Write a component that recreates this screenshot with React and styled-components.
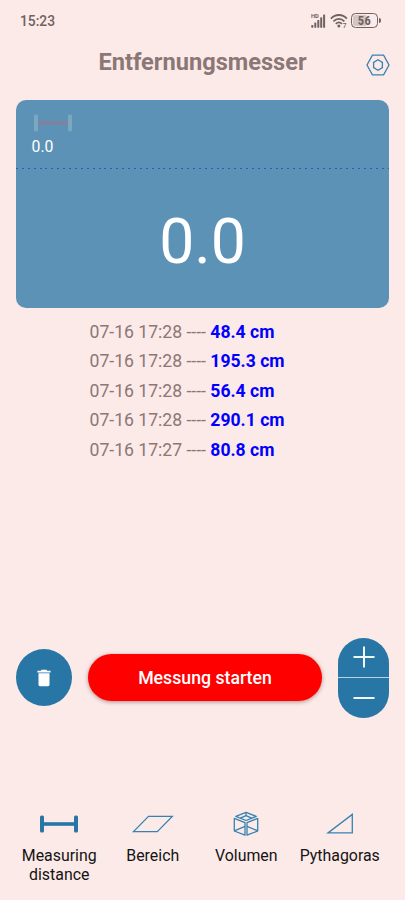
import React from 'react'
import styled, { createGlobalStyle } from 'styled-components'

const blue = '#2876a5'

const history = [
  { date: '07-16 17:28', value: '48.4 cm' },
  { date: '07-16 17:28', value: '195.3 cm' },
  { date: '07-16 17:28', value: '56.4 cm' },
  { date: '07-16 17:28', value: '290.1 cm' },
  { date: '07-16 17:27', value: '80.8 cm' },
]

const SignalIcon = () => (
  <svg width="15" height="16" viewBox="0 0 15 16" fill="#6f6261">
    <text x="0" y="5" fontSize="5.8" fontWeight="700" fontFamily="Roboto, sans-serif">HD</text>
    <rect x="0.3" y="12" width="2" height="2.8" rx="0.6" />
    <rect x="3.3" y="9.4" width="2" height="5.4" rx="0.6" />
    <rect x="6.3" y="7" width="2" height="7.8" rx="0.6" />
    <rect x="9.2" y="4.2" width="2" height="10.6" rx="0.6" />
    <rect x="12.1" y="1.4" width="2" height="13.4" rx="0.6" />
  </svg>
)

const WifiIcon = () => (
  <svg width="18" height="16" viewBox="0 0 18 16" fill="none" stroke="#6f6261" strokeWidth="1.8">
    <path d="M0.9 5.6C5.5 0.8 12.3 0.8 16.9 5.6" />
    <path d="M3.4 8.3C6.7 5 11.1 5 14.4 8.3" />
    <path d="M5.8 10.8C7.7 9 10.1 9 12 10.8" />
    <circle cx="8.9" cy="13" r="1.5" fill="#6f6261" stroke="none" />
    <text x="12.7" y="15.4" fontSize="6.5" fontWeight="500" fontFamily="Roboto, sans-serif" fill="#6f6261" stroke="none">7</text>
  </svg>
)

const SettingsIcon = () => (
  <svg width="24" height="22" viewBox="0 0 24 22" fill="none" stroke="#3683b2" strokeWidth="1.3">
    <path d="M6.4 1.2H17.6L23 11L17.6 20.8H6.4L1 11Z" />
    <path d="M12 5.8L16.4 8.4V13.6L12 16.2L7.6 13.6V8.4Z" />
  </svg>
)

const DistanceIcon = ({ width = 38, bar = blue, ends = blue, endWidth = 4 }) => (
  <svg width={width} height="18" viewBox={`0 0 ${width} 18`}>
    <rect x="3" y="7.2" width={width - 6} height="3.6" fill={bar} />
    <rect x="0" y="0.5" width={endWidth} height="17" rx="1.5" fill={ends} />
    <rect x={width - endWidth} y="0.5" width={endWidth} height="17" rx="1.5" fill={ends} />
  </svg>
)

const AreaIcon = () => (
  <svg width="42" height="18" viewBox="0 0 42 18" fill="none" stroke="#3683b2" strokeWidth="1.3">
    <path d="M16.5 1.4H40.3L25.3 16.6H1.5Z" />
  </svg>
)

const VolumeIcon = () => (
  <svg width="26" height="26" viewBox="0 0 26 26" fill="none" stroke="#3683b2" strokeWidth="1.3" strokeLinejoin="round">
    <path d="M13 1.4L23.2 5.4L13 9.5L2.8 5.4Z" />
    <path d="M1.3 7.4L12 11.6V24.2L1.3 20Z" />
    <path d="M24.7 7.4L14 11.6V24.2L24.7 20Z" />
    <path d="M13 1.4V4.6M13 4.6L7.3 7.1M13 4.6L18.7 7.1" />
    <path d="M1.3 19.8L12 15.4M24.7 19.8L14 15.4" />
  </svg>
)

const TriangleIcon = () => (
  <svg width="28" height="22" viewBox="0 0 28 22" fill="none" stroke="#3683b2" strokeWidth="1.3">
    <path d="M26.3 1.4V19.9H2Z" />
  </svg>
)

const TrashIcon = () => (
  <svg width="14" height="18" viewBox="0 0 14 18" fill="#fff">
    <path d="M4.2 0.8H9.8V1.8H13.6V3.5H0.4V1.8H4.2Z" />
    <path d="M1.5 4.3H12.5V15.8Q12.5 17.2 11.1 17.2H2.9Q1.5 17.2 1.5 15.8Z" />
  </svg>
)

const tabs = [
  { label: 'Measuring distance', icon: <DistanceIcon /> },
  { label: 'Bereich', icon: <AreaIcon /> },
  { label: 'Volumen', icon: <VolumeIcon /> },
  { label: 'Pythagoras', icon: <TriangleIcon /> },
]

const App = () => {
  return (
    <>
      <GlobalStyle />
      <Screen>
        <StatusBar>
          <Clock>15:23</Clock>
          <StatusIcons>
            <SignalIcon />
            <WifiIcon />
            <Battery>56</Battery>
          </StatusIcons>
        </StatusBar>

        <Header>
          <Title>Entfernungsmesser</Title>
          <IconButton aria-label="Einstellungen"><SettingsIcon /></IconButton>
        </Header>

        <Display>
          <Summary>
            <DistanceIcon bar="#82809f" ends="#7ba7c1" />
            <SmallValue>0.0</SmallValue>
          </Summary>
          <DottedLine />
          <BigValue>0.0</BigValue>
        </Display>

        <History>
          {history.map((item, i) => (
            <li key={i}>
              {item.date} ---- <b>{item.value}</b>
            </li>
          ))}
        </History>

        <Controls>
          <RoundButton aria-label="Löschen"><TrashIcon /></RoundButton>
          <StartButton>Messung starten</StartButton>
          <Stepper>
            <StepButton aria-label="Plus">
              <svg width="22" height="22" viewBox="0 0 22 22" stroke="#f1f8fb" strokeWidth="2">
                <path d="M0.5 11H21.5M11 0.5V21.5" />
              </svg>
            </StepButton>
            <StepButton aria-label="Minus">
              <svg width="22" height="22" viewBox="0 0 22 22" stroke="#f1f8fb" strokeWidth="2">
                <path d="M0.5 11H21.5" />
              </svg>
            </StepButton>
          </Stepper>
        </Controls>

        <TabBar>
          {tabs.map(({ label, icon }) => (
            <Tab key={label}>
              <TabIcon>{icon}</TabIcon>
              <TabLabel>{label}</TabLabel>
            </Tab>
          ))}
        </TabBar>
      </Screen>
    </>
  )
}

const GlobalStyle = createGlobalStyle`
  * {
    box-sizing: border-box;
  }
  body {
    margin: 0;
    background-color: #fceae8;
    font-family: Roboto, sans-serif;
  }
  svg {
    display: block;
    flex-shrink: 0;
  }
  button {
    border: none;
    padding: 0;
    font-family: inherit;
  }
`;

const Screen = styled.div`
  width: 405px;
  height: 900px;
  display: flex;
  flex-direction: column;
  overflow: hidden;
`;

const StatusBar = styled.div`
  height: 41px;
  padding: 0 23px 0 20px;
  display: flex;
  justify-content: space-between;
  align-items: center;
  color: #6f6261;
`;

const Clock = styled.span`
  font-size: 13.8px;
  font-weight: 500;
`;

const StatusIcons = styled.div`
  display: flex;
  align-items: center;
  gap: 4px;
`;

const Battery = styled.div`
  width: 27px;
  height: 15px;
  margin: 0 4px 0 -1px;
  display: flex;
  align-items: center;
  justify-content: center;
  position: relative;
  border: 1.5px solid #6f6261;
  border-radius: 4.5px;
  background: linear-gradient(90deg, #d5c5c4 58%, transparent 58%);
  box-shadow: inset 0 0 0 1px #fceae8;
  font-size: 12.5px;
  line-height: 12px;
  font-weight: 700;
  font-stretch: condensed;
  letter-spacing: 0.4px;
  &::after {
    content: '';
    position: absolute;
    right: -4px;
    top: 4px;
    width: 2px;
    height: 5px;
    border-radius: 0 2px 2px 0;
    background-color: #6f6261;
  }
`;

const Header = styled.header`
  height: 59px;
  padding: 0 15.5px 0 39.5px;
  display: flex;
  align-items: flex-start;
`;

const Title = styled.h1`
  flex: 1;
  margin: 7.4px 0 0;
  font-size: 23.6px;
  line-height: 28px;
  font-weight: 700;
  text-align: center;
  color: #8b7776;
`;

const IconButton = styled.button`
  margin-top: 13px;
  background: none;
`;

const Display = styled.section`
  height: 208px;
  margin: 0 16px;
  display: flex;
  flex-direction: column;
  border-radius: 10px;
  background-color: #5c92b5;
  color: #fff;
`;

const Summary = styled.div`
  height: 67.5px;
  padding: 14px 18px 0;
`;

const SmallValue = styled.div`
  margin: 5px 0 0 -2.5px;
  font-size: 15.8px;
  line-height: 19px;
`;

const DottedLine = styled.div`
  height: 1.5px;
  background: repeating-linear-gradient(90deg, #2a55dc 0 2px, transparent 2px 5.9px);
`;

const BigValue = styled.div`
  margin-top: 35px;
  font-size: 62.5px;
  line-height: 75px;
  text-align: center;
`;

const History = styled.ul`
  margin: 9.6px 0 0;
  padding: 0 0 0 89.5px;
  list-style: none;
  font-size: 17.6px;
  line-height: 29.5px;
  color: #8b7776;
  b {
    color: #0000fe;
    font-weight: 700;
  }
`;

const Controls = styled.div`
  height: 80px;
  margin: auto 16px 0;
  display: flex;
  align-items: center;
  gap: 16px;
`;

const RoundButton = styled.button`
  width: 56px;
  height: 57px;
  display: flex;
  align-items: center;
  justify-content: center;
  border-radius: 50%;
  background-color: ${blue};
`;

const StartButton = styled.button`
  flex: 1;
  height: 47px;
  padding-top: 1px;
  border-radius: 24px;
  background-color: #ff0000;
  box-shadow: 0 1px 4px rgba(60, 0, 0, 0.4);
  color: #fff;
  font-size: 17.7px;
  font-weight: 500;
`;

const Stepper = styled.div`
  width: 51px;
  height: 80px;
  display: flex;
  flex-direction: column;
  gap: 1px;
  border-radius: 26px;
  overflow: hidden;
  background-color: #b9d3e0;
`;

const StepButton = styled.button`
  flex: 1;
  display: flex;
  align-items: center;
  justify-content: center;
  background-color: ${blue};
`;

const TabBar = styled.nav`
  height: 182.4px;
  padding: 93.4px 18.5px 0 12.5px;
  display: flex;
`;

const Tab = styled.div`
  flex: 1 1 0;
  min-width: 0;
  display: flex;
  flex-direction: column;
  align-items: center;
`;

const TabIcon = styled.div`
  height: 26px;
  display: flex;
  align-items: center;
`;

const TabLabel = styled.div`
  margin-top: 10px;
  font-size: 15.9px;
  line-height: 18.8px;
  text-align: center;
  color: #151313;
`;

export default App;
